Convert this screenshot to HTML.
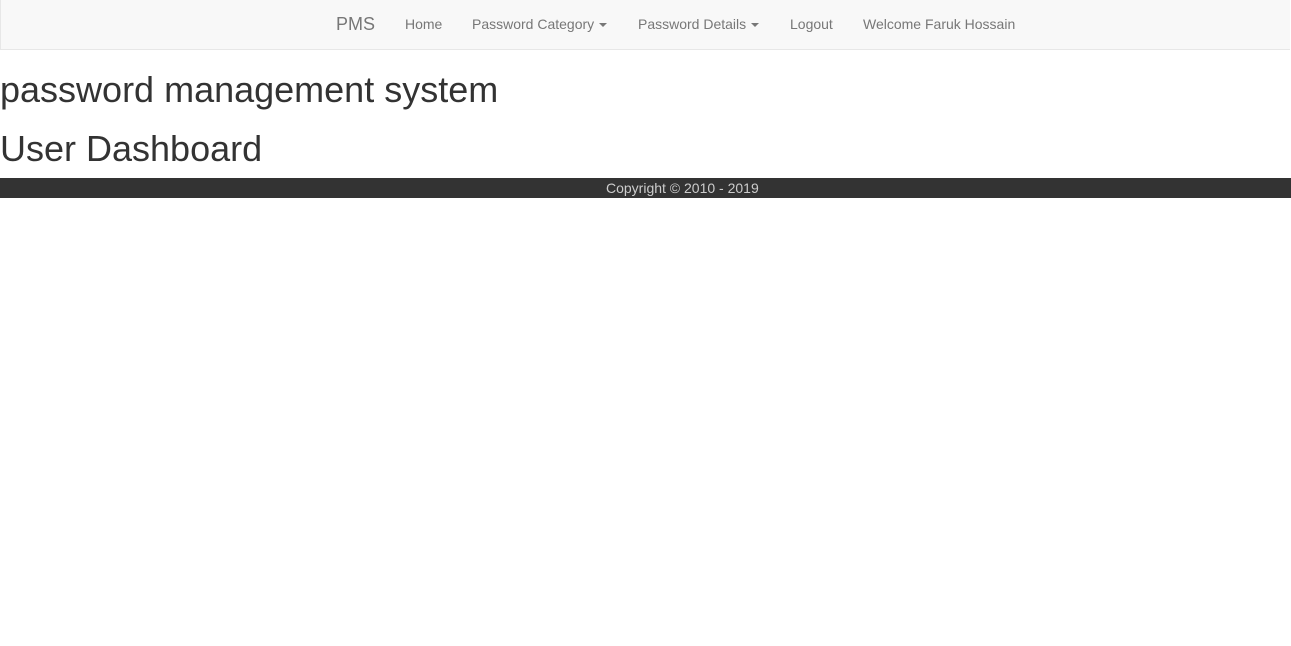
<!DOCTYPE html>
<html><head><style>
body{margin:0;font-family:"Liberation Sans",Arial,sans-serif;color:#333;background:#fff;}
.nav{position:absolute;left:0;top:0;width:1289px;height:49px;background:#f8f8f8;border:1px solid #e7e7e7;border-top:0;border-right:0;}
.nav span{position:absolute;top:16px;font-size:14px;color:#777;line-height:16px;white-space:nowrap;}
.nav .brand{font-size:18px;top:14px;line-height:20px;}
.caret{display:inline-block;width:0;height:0;border-top:4px solid #777;border-left:4px solid transparent;border-right:4px solid transparent;vertical-align:middle;margin-left:5px;}
h1{position:absolute;left:0;margin:0;font-size:36px;font-weight:normal;line-height:40px;white-space:nowrap;}
.foot{position:absolute;left:0;top:178px;width:1291px;height:20px;background:#333;color:#ccc;font-size:14px;line-height:20px;}
.foot span{position:absolute;left:606px;}
</style></head><body>
<div class="nav">
<span class="brand" style="left:335px">PMS</span>
<span style="left:404px">Home</span>
<span style="left:471px">Password Category<i class="caret"></i></span>
<span style="left:637px">Password Details<i class="caret"></i></span>
<span style="left:789px">Logout</span>
<span style="left:862px">Welcome Faruk Hossain</span>
</div>
<h1 style="top:70px">password management system</h1>
<h1 style="top:129px">User Dashboard</h1>
<div class="foot"><span>Copyright © 2010 - 2019</span></div>
</body></html>
